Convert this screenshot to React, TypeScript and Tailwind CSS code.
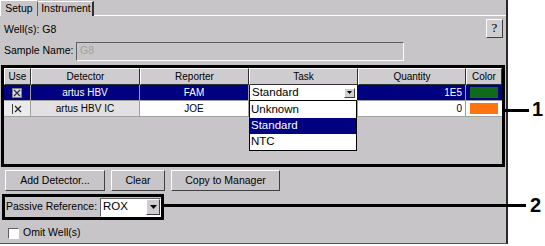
import React from "react";

const bevelOut = "border-t border-l border-t-white border-l-white border-r border-b border-r-[#404040] border-b-[#404040]";
const bevelIn = "border-t border-l border-t-[#606060] border-l-[#606060] border-r border-b border-r-white border-b-white";

function Btn({ w, children }: { w: string; children: React.ReactNode }) {
  return (
    <div className={`${w} shrink-0 h-[21px] ${bevelOut} bg-[#c8c5c8] flex items-center justify-center text-[10.5px] text-black whitespace-nowrap`}>
      {children}
    </div>
  );
}

function DownArrow() {
  return (
    <svg width="7" height="4" viewBox="0 0 7 4">
      <path d="M0 0 L7 0 L3.5 4 Z" fill="#000" />
    </svg>
  );
}

function XBox({ checked }: { checked: boolean }) {
  return (
    <div className={`w-[10px] h-[10px] ${checked ? "bg-[#d8d8e8] border border-[#808080]" : "border-l border-[#404040]"} flex items-center justify-center`}>
      <svg width="8" height="8" viewBox="0 0 8 8">
        <path d="M1 1 L7 7 M7 1 L1 7" stroke={checked ? "#303030" : "#202020"} strokeWidth="1.2" />
      </svg>
    </div>
  );
}

export default function App() {
  return (
    <div className="w-[545px] h-[246px] bg-white relative overflow-hidden whitespace-nowrap" style={{ fontFamily: '"Liberation Sans", Arial, sans-serif' }}>
      <div className="w-[508px] h-[244px] bg-[#c8c5c8] border-r-2 border-r-[#2a2a2a] border-b border-b-[#505050] flex flex-col">
        {/* Tabs */}
        <div className="h-[16px] flex items-end shrink-0">
          <div className="w-[37px] shrink-0 h-[16px] border-l border-t border-white flex items-center justify-center text-[10.5px] text-black pt-[1px]">Setup</div>
          <div className="w-[57px] shrink-0 h-[15px] border-t border-l border-white border-l-[#606060] border-r-2 border-r-[#303030] flex items-center justify-center text-[10.5px] text-black pl-[2px]">Instrument</div>
          <div className="flex-1 h-[1px] bg-white"></div>
        </div>
        {/* Well row */}
        <div className="h-[22px] shrink-0 flex items-center pl-[4px] pr-[3px] mt-[1px]">
          <div className="text-[10.5px] text-black flex-1 pt-[4px]">Well(s): G8</div>
          <div className={`w-[17px] shrink-0 h-[19px] ${bevelOut} bg-[#d0cdd0] flex items-center justify-center text-[13px] text-black`} style={{ fontFamily: '"Liberation Serif", serif' }}>?</div>
        </div>
        {/* Sample name */}
        <div className="h-[20px] shrink-0 flex items-center pl-[4px] mt-[2px]">
          <div className="w-[72px] shrink-0 text-[10.5px] text-black">Sample Name:</div>
          <div className={`w-[328px] shrink-0 h-[19px] ${bevelIn} bg-[#c8c5c8] text-[10.5px] text-[#a0a0a0] pl-[3px] flex items-center`}>G8</div>
        </div>
        {/* Table */}
        <div className="mt-[4px] ml-[1px] shrink-0 w-[504px] h-[102px] border-[3px] border-black bg-[#c8c5c8] relative">
          <div className="flex h-[17px] text-[10px] text-black">
            {[
              ["w-[27px]", "Use"],
              ["w-[109px]", "Detector"],
              ["w-[109px]", "Reporter"],
              ["w-[109px]", "Task"],
              ["w-[108px]", "Quantity"],
              ["w-[36px]", "Color"],
            ].map(([w, t]) => (
              <div key={t} className={`${w} shrink-0 h-full border-t border-l border-white border-r border-r-[#303030] border-b border-b-[#303030] bg-[#cfcccf] flex items-center justify-center`}>{t}</div>
            ))}
          </div>
          {/* Row 1 */}
          <div className="flex h-[16px] bg-[#000080] text-[10px] text-white border-b border-[#a0a0a0]">
            <div className="w-[27px] shrink-0 flex items-center justify-center border-r border-[#a0a0a0]"><XBox checked /></div>
            <div className="w-[109px] shrink-0 flex items-center justify-center border-r border-[#a0a0a0]">artus HBV</div>
            <div className="w-[109px] shrink-0 flex items-center justify-center border-r border-[#a0a0a0]">FAM</div>
            <div className="w-[109px] shrink-0 flex items-center">
              <div className="w-[107px] h-[15px] bg-white ml-[1px] flex items-center text-[11.5px] text-black pl-[2px]">
                <span className="flex-1">Standard</span>
                <div className={`w-[11px] h-[10px] ${bevelOut} bg-[#d0d0d0] mr-[2px] flex items-center justify-center`}>
                  <svg width="5" height="3" viewBox="0 0 5 3"><path d="M0 0 L5 0 L2.5 3 Z" fill="#000" /></svg>
                </div>
              </div>
            </div>
            <div className="w-[108px] shrink-0 flex items-center justify-end pr-[3px] border-r border-[#a0a0a0]">1E5</div>
            <div className="w-[36px] shrink-0 flex items-center justify-center">
              <div className="w-[28px] h-[11px] bg-[#0f6a1a]"></div>
            </div>
          </div>
          {/* Row 2 */}
          <div className="flex h-[16px] text-[10px] text-black border-b border-[#a0a0a0]">
            <div className="w-[27px] shrink-0 bg-[#ecebec] flex items-center justify-center border-r border-[#a0a0a0]"><XBox checked={false} /></div>
            <div className="w-[109px] shrink-0 bg-[#e2e0e2] flex items-center justify-center border-r border-[#a0a0a0]">artus HBV IC</div>
            <div className="w-[109px] shrink-0 bg-white flex items-center justify-center border-r border-[#a0a0a0]">JOE</div>
            <div className="w-[109px] shrink-0 bg-white border-r border-[#a0a0a0]"></div>
            <div className="w-[108px] shrink-0 bg-white flex items-center justify-end pr-[3px] border-r border-[#a0a0a0]">0</div>
            <div className="w-[36px] shrink-0 bg-white flex items-center justify-center">
              <div className="w-[28px] h-[11px] bg-[#ff7410]"></div>
            </div>
          </div>
          {/* Dropdown list */}
          <div className="absolute left-[245px] top-[32px] w-[108px] h-[51px] bg-white border border-black text-[11.5px] text-black flex flex-col">
            <div className="h-[17px] flex items-center pl-[1px]">Unknown</div>
            <div className="h-[16px] flex items-center pl-[1px] bg-[#000080] text-white">Standard</div>
            <div className="h-[16px] flex items-center pl-[1px]">NTC</div>
          </div>
        </div>
        {/* Buttons */}
        <div className="flex gap-[6px] ml-[5px] mt-[3px] shrink-0">
          <Btn w="w-[100px]">Add Detector...</Btn>
          <Btn w="w-[54px]">Clear</Btn>
          <Btn w="w-[109px]">Copy to Manager</Btn>
        </div>
        {/* Passive reference */}
        <div className="ml-[2px] mt-[3px] shrink-0 w-[162px] h-[26px] border-[3px] border-black flex items-center pl-[1px]">
          <div className="w-[94px] shrink-0 text-[10.5px] text-black">Passive Reference:</div>
          <div className={`w-[61px] shrink-0 h-[19px] ${bevelIn} bg-white flex items-center text-[11.5px] text-black pl-[2px]`}>
            <span className="flex-1">ROX</span>
            <div className={`w-[14px] h-[16px] ${bevelOut} bg-[#d0cdd0] flex items-center justify-center`}>
              <DownArrow />
            </div>
          </div>
        </div>
        {/* Omit */}
        <div className="flex items-center ml-[8px] mt-[6px] h-[14px] shrink-0">
          <div className={`w-[11px] h-[11px] ${bevelIn} bg-white`}></div>
          <div className="ml-[4px] text-[10.5px] text-black">Omit Well(s)</div>
        </div>
      </div>
      {/* Callout 1 */}
      <div className="absolute left-[505px] top-[109px] w-[24px] h-[3px] bg-black"></div>
      <div className="absolute left-[532px] top-[99px] text-[20px] font-bold text-black leading-none">1</div>
      {/* Callout 2 */}
      <div className="absolute left-[164px] top-[204px] w-[362px] h-[3px] bg-black"></div>
      <div className="absolute left-[530px] top-[195px] text-[20px] font-bold text-black leading-none">2</div>
    </div>
  );
}
